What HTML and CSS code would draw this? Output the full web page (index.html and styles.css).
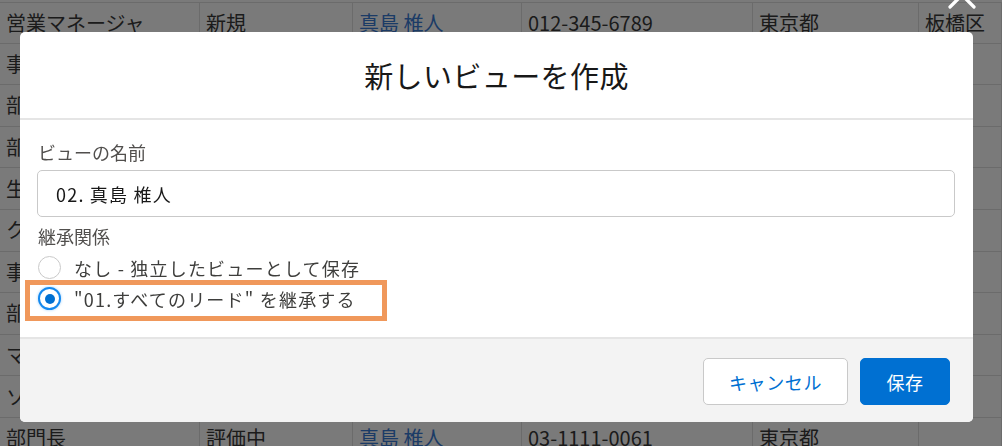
FILE: index.html
```html
<!DOCTYPE html>
<html lang="ja">
<head>
    <meta charset="UTF-8">
    <meta name="viewport" content="width=device-width, initial-scale=1.0">
    <title>新しいビューを作成</title>
    <link rel="stylesheet" href="styles.css">
</head>
<body>

    <!-- Records list behind the modal -->
    <table class="records">
        <colgroup>
            <col style="width: 200px">
            <col style="width: 153px">
            <col style="width: 169px">
            <col style="width: 231px">
            <col style="width: 166px">
            <col style="width: 83px">
        </colgroup>
        <tr><td>営業マネージャ</td><td>新規</td><td class="link">真島 椎人</td><td>012-345-6789</td><td>東京都</td><td>板橋区</td></tr>
        <tr><td>事務</td><td>新規</td><td class="link">真島 椎人</td><td>03-1111-0011</td><td>東京都</td><td></td></tr>
        <tr><td>部長</td><td>新規</td><td class="link">真島 椎人</td><td>03-1111-0021</td><td>東京都</td><td></td></tr>
        <tr><td>部長</td><td>連絡済み</td><td class="link">真島 椎人</td><td>03-1111-0031</td><td>大阪府</td><td></td></tr>
        <tr><td>生産管理</td><td>新規</td><td class="link">真島 椎人</td><td>03-1111-0041</td><td>東京都</td><td></td></tr>
        <tr><td>クリエイター</td><td>評価中</td><td class="link">真島 椎人</td><td>03-1111-0051</td><td>東京都</td><td></td></tr>
        <tr><td>事務</td><td>新規</td><td class="link">真島 椎人</td><td>03-1111-0071</td><td>東京都</td><td></td></tr>
        <tr><td>部長</td><td>新規</td><td class="link">真島 椎人</td><td>03-1111-0081</td><td>東京都</td><td></td></tr>
        <tr><td>マネージャ</td><td>新規</td><td class="link">真島 椎人</td><td>03-1111-0091</td><td>東京都</td><td></td></tr>
        <tr><td>ソフト開発</td><td>新規</td><td class="link">真島 椎人</td><td>03-1111-0101</td><td>東京都</td><td></td></tr>
        <tr><td>部門長</td><td>評価中</td><td class="link">真島 椎人</td><td>03-1111-0061</td><td>東京都</td><td></td></tr>
    </table>

    <div class="backdrop"></div>

    <!-- New list view modal -->
    <div class="modal">
        <button class="modal-close" type="button" aria-label="閉じる">
            <svg width="28" height="28" viewBox="0 0 28 28">
                <path d="M2 2 L26 26 M26 2 L2 26" stroke="#fff" stroke-width="3.2" stroke-linecap="round" fill="none"/>
            </svg>
        </button>

        <header class="modal-header">
            <h2>新しいビューを作成</h2>
        </header>

        <div class="modal-body">
            <label class="field-label" for="view-name">ビューの名前</label>
            <input class="field-input" type="text" id="view-name" value="02. 真島 椎人">

            <div class="field-label group-label">継承関係</div>
            <label class="radio first">
                <input type="radio" name="inherit">
                <span class="radio-mark"></span>
                なし - 独立したビューとして保存
            </label>
            <label class="radio">
                <input type="radio" name="inherit" checked>
                <span class="radio-mark"></span>
                &quot;01.すべてのリード&quot; を継承する
            </label>

            <!-- annotation box around the chosen option -->
            <div class="highlight"></div>
        </div>

        <footer class="modal-footer">
            <button class="btn btn-neutral" type="button">キャンセル</button>
            <button class="btn btn-brand" type="button">保存</button>
        </footer>
    </div>

</body>
</html>
```

FILE: styles.css
```css
body {
    font-family: "Noto Sans CJK JP", "Noto Sans", sans-serif;
    margin: 0;
    background-color: #fff;
    overflow: hidden;
}

/* background list */
.records {
    table-layout: fixed;
    width: 1002px;
    margin-top: 2px;
    border-collapse: separate;
    border-spacing: 0;
    font-size: 20px;
    color: #3a3a3a;
}
.records tr {
    height: 41.6px;
}
.records td {
    padding: 0 6px;
    border-bottom: 1px solid #e0e0e0;
    border-right: 1px solid #e0e0e0;
    white-space: nowrap;
    overflow: hidden;
    line-height: 24px;
}
.records tr:first-child td {
    border-top: 1px solid #e0e0e0;
}
.records td.link {
    color: #3a7bd5;
}

.backdrop {
    position: fixed;
    inset: 0;
    background-color: rgba(0, 0, 0, 0.52);
}

/* modal */
.modal {
    position: fixed;
    left: 20px;
    top: 32px;
    width: 953px;
    background-color: #fff;
    border-radius: 5px;
}
.modal-close {
    position: absolute;
    left: 928px;
    top: -51px;
    width: 28px;
    height: 28px;
    padding: 0;
    border: none;
    background: none;
}
.modal-close svg {
    display: block;
}
.modal-header {
    height: 86px;
    display: flex;
    align-items: center;
    justify-content: center;
    border-bottom: 2px solid #e5e5e5;
}
.modal-header h2 {
    margin: 0;
    font-size: 29px;
    font-weight: 400;
    color: #181818;
    letter-spacing: 0.4px;
}

.modal-body {
    position: relative;
    padding: 20px 18px 23px 17px;
    display: flex;
    flex-direction: column;
}
.field-label {
    font-size: 18px;
    line-height: 24px;
    color: #514f4d;
    padding-left: 1px;
}
.field-input {
    margin-top: 6px;
    height: 47px;
    box-sizing: border-box;
    padding: 0 18px;
    border: 1px solid #c9c9c9;
    border-radius: 5px;
    font-family: inherit;
    font-size: 18px;
    letter-spacing: 1.2px;
    color: #181818;
    outline: none;
}
.group-label {
    margin-top: 7px;
}
.radio {
    display: flex;
    align-items: center;
    height: 31px;
    font-size: 18px;
    letter-spacing: 1.2px;
    color: #3e3e3c;
}
.radio.first {
    margin-top: 4px;
}
.radio input {
    display: none;
}
.radio-mark {
    width: 23px;
    height: 23px;
    box-sizing: border-box;
    margin: 0 13px 0 1px;
    border: 1.5px solid #c9c9c9;
    border-radius: 50%;
    background-color: #fff;
    position: relative;
}
.radio input:checked + .radio-mark {
    border: 2px solid #1589ee;
    box-shadow: 0 0 3px #9fd0fb;
}
.radio input:checked + .radio-mark::after {
    content: "";
    position: absolute;
    left: 4.5px;
    top: 4.5px;
    width: 10px;
    height: 10px;
    border-radius: 50%;
    background-color: #0070d2;
}
.highlight {
    position: absolute;
    left: 5px;
    top: 160px;
    width: 362px;
    height: 41px;
    box-sizing: border-box;
    border: 5px solid #f0985b;
}

.modal-footer {
    display: flex;
    justify-content: flex-end;
    gap: 12px;
    padding: 19px 23px 17px;
    background-color: #f3f3f3;
    border-top: 2px solid #e5e5e5;
    border-radius: 0 0 5px 5px;
}
.btn {
    height: 47px;
    border-radius: 5px;
    font-family: inherit;
    font-size: 18px;
    letter-spacing: 0.6px;
    cursor: pointer;
}
.btn-neutral {
    width: 145px;
    background-color: #fff;
    border: 1px solid #c9c9c9;
    color: #0070d2;
}
.btn-brand {
    width: 90px;
    background-color: #0070d2;
    border: 1px solid #0070d2;
    color: #fff;
}
```
